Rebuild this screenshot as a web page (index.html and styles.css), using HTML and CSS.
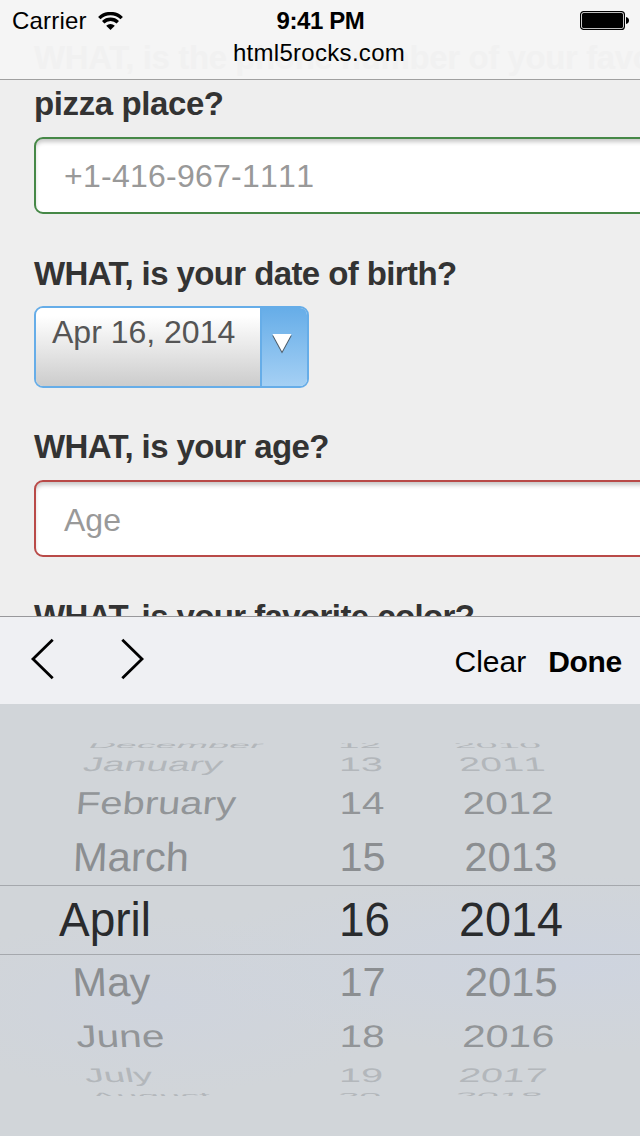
FILE: index.html
```html
<!DOCTYPE html>
<html lang="en">
<head>
<meta charset="utf-8">
<title>html5rocks.com</title>
<link rel="stylesheet" href="styles.css">
</head>
<body>
<div class="screen">
  <header class="top">
    <div class="under">WHAT, is the phone number of your favorite</div>
    <div class="status">
      <div class="carrier"><span>Carrier</span>
        <svg width="25" height="18" viewBox="0 0 25 18"><g fill="none" stroke="#000" stroke-width="3.4"><path d="M1.3 6.1A16 16 0 0 1 23.7 6.1"/><path d="M5.2 10.3A10.4 10.4 0 0 1 19.8 10.3"/></g><path d="M8.2 13.8A6 6 0 0 1 16.8 13.8L12.5 18Z"/></svg>
      </div>
      <div class="time">9:41 PM</div>
      <svg class="battery" width="49" height="19" viewBox="0 0 49 19"><rect x=".6" y=".6" width="43.8" height="17.8" rx="3" fill="#fff" stroke="#000" stroke-width="1.2"/><rect x="2" y="2" width="41" height="15" rx="1.5"/><path d="M46 6C50 6.5 50 12.5 46 13Z"/></svg>
    </div>
    <div class="host">html5rocks.com</div>
  </header>
  <main class="form">
    <label class="label pizza">pizza place?</label>
    <div class="field valid">+1-416-967-1111</div>
    <label class="label">WHAT, is your date of birth?</label>
    <div class="select">
      <div class="value">Apr 16, 2014</div>
      <div class="arrow"><svg width="22" height="22" viewBox="0 0 22 22"><path d="M1.2 2.6H20.8L11 20.6Z" fill="#4b5965"/><path d="M1.5 1H20.5L11 18.6Z" fill="#fff"/></svg></div>
    </div>
    <label class="label after-select">WHAT, is your age?</label>
    <div class="field invalid">Age</div>
    <label class="label">WHAT, is your favorite color?</label>
  </main>
  <div class="toolbar">
    <svg class="nav" width="116" height="44" viewBox="0 0 116 44" fill="none" stroke="#000" stroke-width="2.8"><path d="M23.7 2.8L4 22L23.7 41.2M93.3 2.8L113 22L93.3 41.2"/></svg>
    <div class="actions"><span class="clear">Clear</span><span class="done">Done</span></div>
  </div>
  <div class="picker">
    <svg class="wheel" width="640" height="432" viewBox="0 0 640 432">
      <defs><clipPath id="window"><rect y="39.3" width="640" height="352.7"/></clipPath></defs>
      <g clip-path="url(#window)" fill="#8b8e91" font-size="40">
        <g fill="#b3b7bb">
          <text transform="translate(87 44.3) skewX(-35) scale(1 .21)" textLength="174" lengthAdjust="spacingAndGlyphs">December</text>
          <text transform="translate(338 44.3) scale(1 .21)" textLength="43" lengthAdjust="spacingAndGlyphs">12</text>
          <text transform="translate(455 44.3) skewX(20) scale(1 .21)" textLength="87" lengthAdjust="spacingAndGlyphs">2010</text>
          <text transform="translate(82 67.3) skewX(-15) scale(1 .49)" textLength="139" lengthAdjust="spacingAndGlyphs">January</text>
          <text transform="translate(339 67.3) skewX(1) scale(1 .49)" textLength="44" lengthAdjust="spacingAndGlyphs">13</text>
          <text transform="translate(460 67.3) skewX(9) scale(1 .49)" textLength="86" lengthAdjust="spacingAndGlyphs">2011</text>
        </g>
        <g fill="#929598">
          <text transform="translate(75 109.5) skewX(-5) scale(1 .79)" textLength="160" lengthAdjust="spacingAndGlyphs">February</text>
          <text transform="translate(339.5 109.5) skewX(1) scale(1 .79)" textLength="45" lengthAdjust="spacingAndGlyphs">14</text>
          <text transform="translate(463 109.5) skewX(3) scale(1 .79)" textLength="91" lengthAdjust="spacingAndGlyphs">2012</text>
        </g>
        <text transform="translate(72.5 166.5) skewX(-2) scale(1 1.01)" textLength="116" lengthAdjust="spacingAndGlyphs">March</text>
        <text transform="translate(339.5 166.5) scale(1 1.01)" textLength="46" lengthAdjust="spacingAndGlyphs">15</text>
        <text transform="translate(464.5 166.5) skewX(1) scale(1 1.01)" textLength="93" lengthAdjust="spacingAndGlyphs">2013</text>
        <g fill="#292b2d" font-size="48">
          <text x="59" y="232" textLength="92" lengthAdjust="spacingAndGlyphs">April</text>
          <text x="339" y="232" textLength="51" lengthAdjust="spacingAndGlyphs">16</text>
          <text x="459" y="232" textLength="104" lengthAdjust="spacingAndGlyphs">2014</text>
        </g>
        <text transform="translate(73 292) skewX(2) scale(1 1.01)" textLength="78" lengthAdjust="spacingAndGlyphs">May</text>
        <text transform="translate(339.5 292) scale(1 1.01)" textLength="46" lengthAdjust="spacingAndGlyphs">17</text>
        <text transform="translate(464.5 292) skewX(-1) scale(1 1.01)" textLength="93" lengthAdjust="spacingAndGlyphs">2015</text>
        <g fill="#929598">
          <text transform="translate(77 343) skewX(4) scale(1 .78)" textLength="88" lengthAdjust="spacingAndGlyphs">June</text>
          <text transform="translate(339.5 343) skewX(-1) scale(1 .78)" textLength="45" lengthAdjust="spacingAndGlyphs">18</text>
          <text transform="translate(462 343) skewX(-3) scale(1 .78)" textLength="92" lengthAdjust="spacingAndGlyphs">2016</text>
        </g>
        <g fill="#b3b7bb">
          <text transform="translate(86 378) skewX(12) scale(1 .49)" textLength="68" lengthAdjust="spacingAndGlyphs">July</text>
          <text transform="translate(339 378) skewX(-1) scale(1 .49)" textLength="44" lengthAdjust="spacingAndGlyphs">19</text>
          <text transform="translate(458 378) skewX(-9) scale(1 .49)" textLength="88" lengthAdjust="spacingAndGlyphs">2017</text>
          <text transform="translate(93 394.5) skewX(35) scale(1 .23)" textLength="120" lengthAdjust="spacingAndGlyphs">August</text>
          <text transform="translate(338 394.5) scale(1 .23)" textLength="43" lengthAdjust="spacingAndGlyphs">20</text>
          <text transform="translate(454 394.5) skewX(-20) scale(1 .23)" textLength="87" lengthAdjust="spacingAndGlyphs">2018</text>
        </g>
      </g>
      <path d="M0 181.5H640M0 250.5H640" stroke="#a5a8ad"/>
    </svg>
  </div>
</div>
</body>
</html>
```
FILE: styles.css
```css
body {
  margin: 0;
  font-family: "Liberation Sans", Arial, sans-serif;
  font-kerning: none;
  color: #000;
}

.screen {
  display: flex;
  flex-direction: column;
  width: 640px;
  height: 1136px;
  overflow: hidden;
  background: #eee;
}

.top {
  position: relative;
  box-sizing: border-box;
  height: 80px;
  flex: none;
  padding-top: 7px;
  overflow: hidden;
  background: #f5f5f5;
  border-bottom: 1px solid #a0a0a0;
}

.under {
  position: absolute;
  left: 34px;
  top: 38px;
  font: bold 33px/40px "Liberation Sans", Arial, sans-serif;
  font-kerning: normal;
  letter-spacing: -0.4px;
  white-space: nowrap;
  color: #f1f1f1;
}

.status {
  position: relative;
  display: grid;
  grid-template-columns: 1fr auto 1fr;
  align-items: center;
  height: 27px;
  padding: 0 11px 0 12px;
  font-size: 24px;
  line-height: 27px;
}

.carrier {
  display: flex;
  align-items: center;
  gap: 11px;
  letter-spacing: 0.2px;
}

.time {
  font-weight: bold;
  letter-spacing: -0.4px;
}

.battery {
  justify-self: end;
}

.host {
  position: relative;
  margin-top: 5px;
  padding-right: 2px;
  text-align: center;
  font-size: 24px;
  line-height: 27px;
  letter-spacing: 0.3px;
}

.form {
  display: flex;
  flex-direction: column;
  align-items: flex-start;
  box-sizing: border-box;
  height: 536px;
  flex: none;
  padding: 4px 0 0 34px;
  overflow: hidden;
}

.label {
  flex: none;
  margin-top: 40px;
  font-size: 33px;
  line-height: 40px;
  font-weight: bold;
  font-kerning: normal;
  letter-spacing: -0.6px;
  white-space: nowrap;
  color: #333;
}

.pizza {
  margin-top: 0;
  letter-spacing: -0.4px;
}

.after-select {
  margin-top: 39px;
}

.field {
  box-sizing: border-box;
  flex: none;
  width: 640px;
  height: 77px;
  margin-top: 13px;
  padding-left: 28px;
  border: 2px solid;
  border-radius: 9px;
  background: #fff;
  box-shadow: inset 0 4px 4px -1px rgba(0, 0, 0, 0.22);
  font-size: 32px;
  line-height: 74px;
  color: #999;
}

.valid {
  border-color: #468847;
  letter-spacing: 0.25px;
}

.invalid {
  border-color: #b94a48;
  line-height: 76px;
}

.select {
  display: flex;
  box-sizing: border-box;
  flex: none;
  width: 275px;
  height: 82px;
  margin-top: 12px;
  border: 2px solid #66ade8;
  border-radius: 9px;
  overflow: hidden;
}

.value {
  flex: 1;
  padding: 4px 0 0 16px;
  font-size: 32px;
  line-height: 40px;
  white-space: nowrap;
  color: #555;
  background: linear-gradient(#fff 10%, #ccc);
}

.arrow {
  display: flex;
  justify-content: center;
  box-sizing: border-box;
  width: 47px;
  padding: 25px 5px 0 0;
  border-left: 2px solid #66ade8;
  background: linear-gradient(#66ade8, #a5d0f4);
}

.toolbar {
  display: flex;
  justify-content: space-between;
  align-items: center;
  box-sizing: border-box;
  height: 88px;
  flex: none;
  padding: 0 18px 0 29px;
  background: #eff0f3;
  border-top: 1px solid #98989b;
}

.nav {
  margin-bottom: 3px;
}

.actions {
  display: flex;
  gap: 22px;
  padding-top: 3px;
  font-size: 30px;
  line-height: 36px;
}

.done {
  font-weight: bold;
  letter-spacing: -0.3px;
}

.picker {
  height: 432px;
  flex: none;
  background: radial-gradient(ellipse 380px 90px at 560px 260px, #ced4df, transparent), radial-gradient(ellipse 240px 90px at 160px 300px, #cfd4dd, transparent), #d1d5d9;
}

.wheel {
  display: block;
}
```
